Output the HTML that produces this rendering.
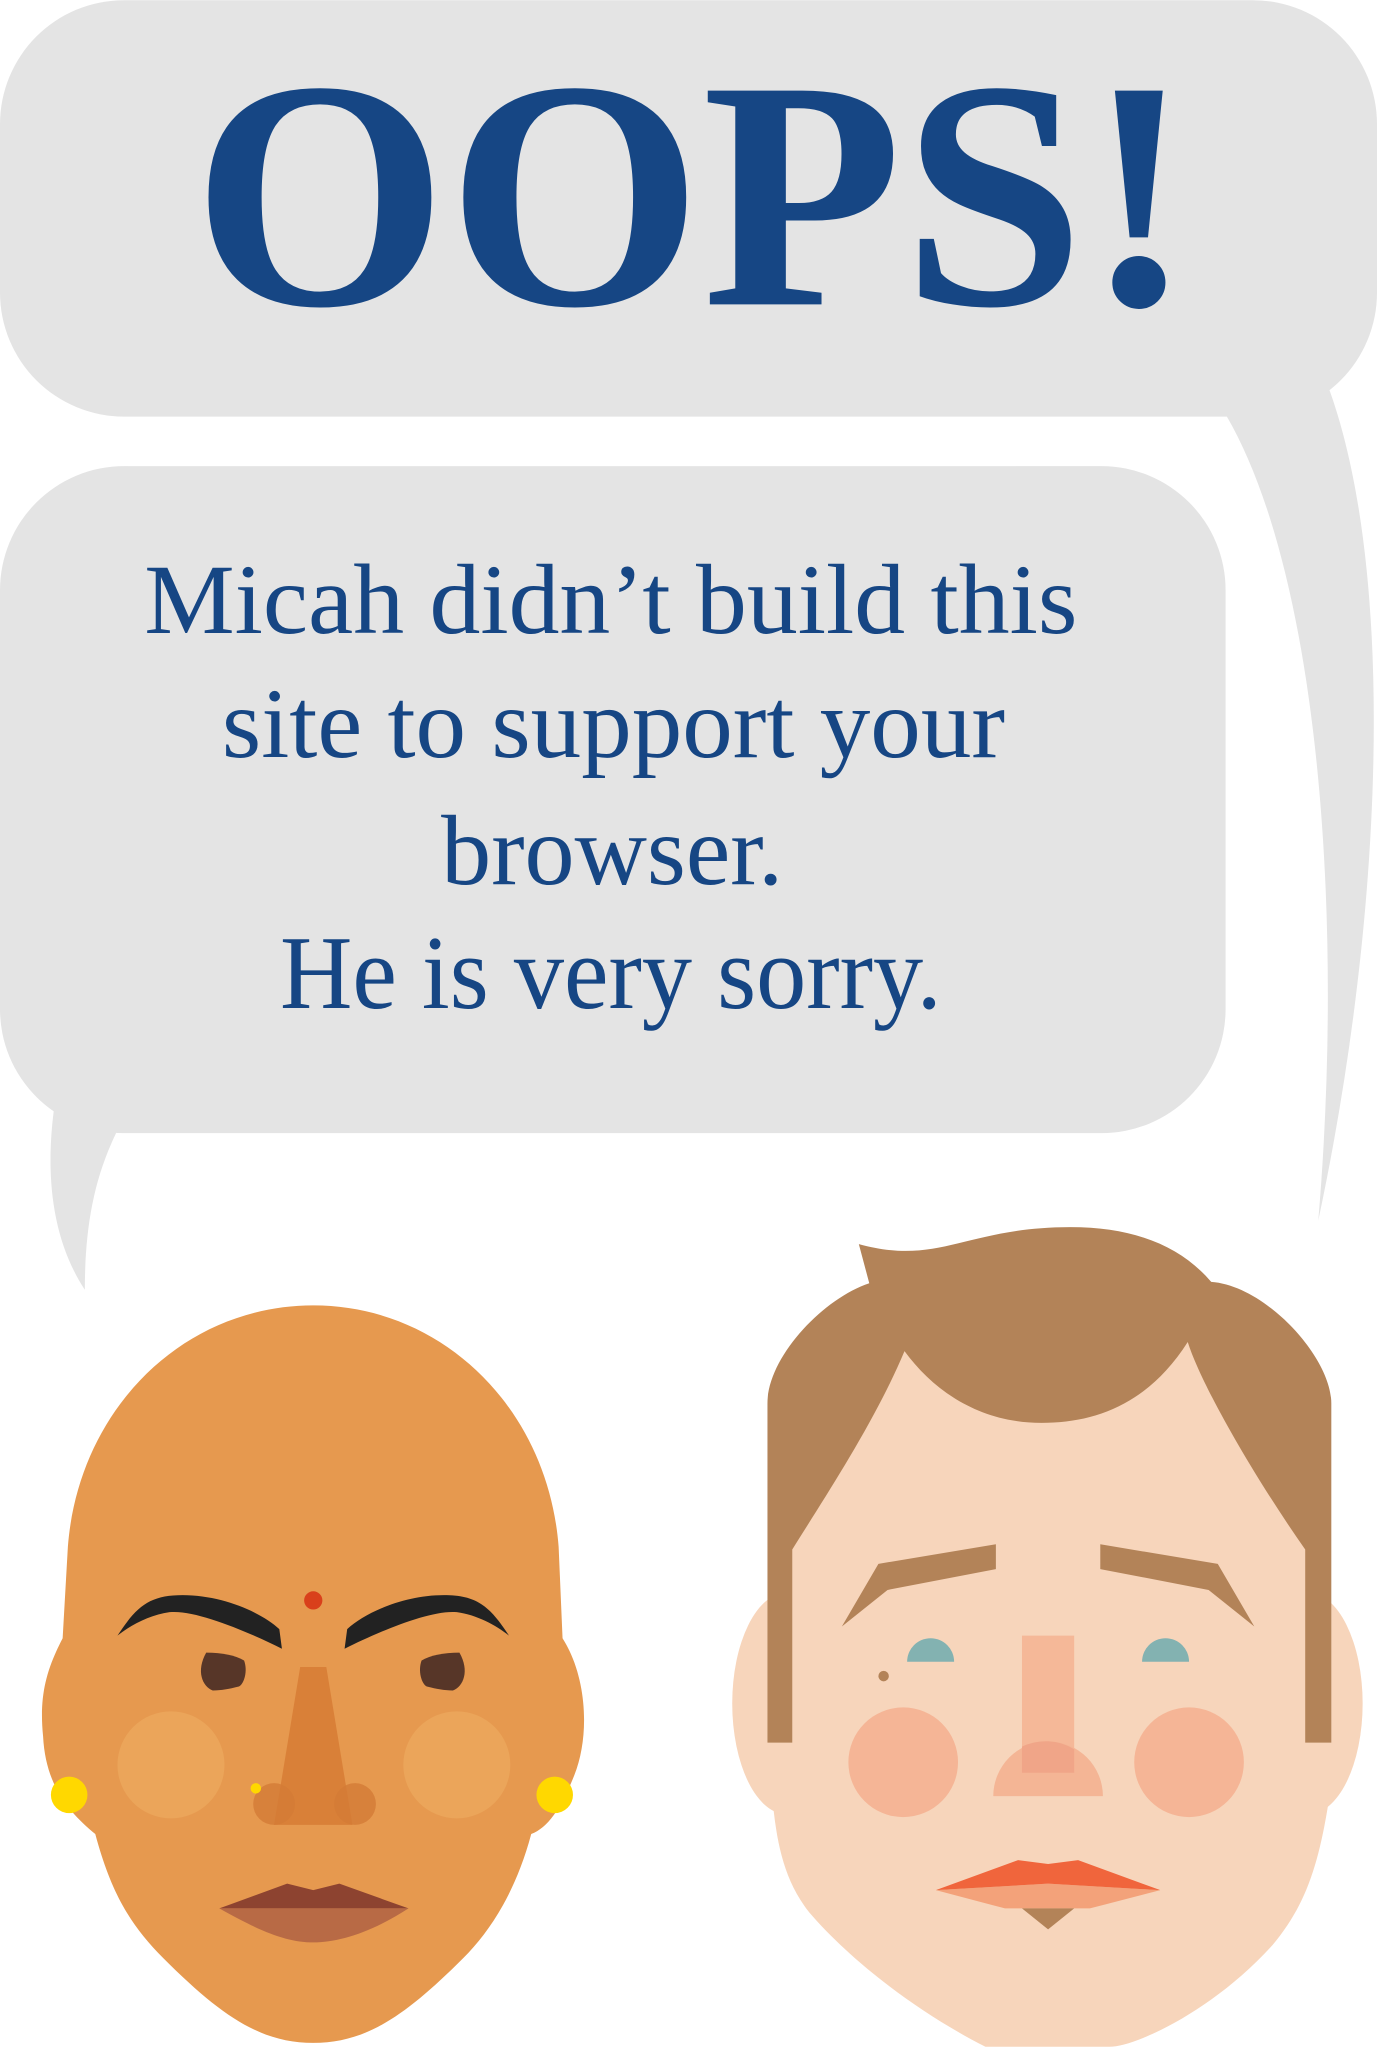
<!DOCTYPE html>
<html><head><meta charset="utf-8"><style>html,body{margin:0;padding:0;background:#fff;}svg{display:block}</style></head>
<body>
<svg width="1377" height="2047" viewBox="0 0 1055 1568" xmlns="http://www.w3.org/2000/svg">
<g fill="#e4e4e4">
<rect x="0" y="0" width="1055" height="319" rx="95"/>
<path d="M940,319 C1010,440 1030,700 1010,935 C1060,700 1070,440 1018,297 Z"/>
<rect x="0" y="357" width="939" height="511" rx="95"/>
<path d="M42,845 C34,900 40,950 65,988 C65,940 72,900 92,862 Z"/>
</g>
<text x="531" y="233" text-anchor="middle" font-family="Liberation Serif, serif" font-weight="bold" font-size="250" fill="#164684" textLength="767" lengthAdjust="spacingAndGlyphs">OOPS!</text>
<g font-family="Liberation Serif, serif" font-size="76" fill="#164684" text-anchor="middle">
<text x="468" y="485" textLength="715" lengthAdjust="spacingAndGlyphs">Micah didn’t build this</text>
<text x="470" y="580" textLength="600" lengthAdjust="spacingAndGlyphs">site to support your</text>
<text x="469" y="677" textLength="262" lengthAdjust="spacingAndGlyphs">browser.</text>
<text x="468" y="772" font-size="80" textLength="507" lengthAdjust="spacingAndGlyphs">He is very sorry.</text>
</g>
<!-- woman -->
<path fill="#e6994f" d="M52,1185 C60,1080 140,1000 240,1000 C340,1000 420,1080 428,1185 L431,1255 C450,1285 452,1330 440,1360 C430,1385 420,1400 407,1405 C395,1450 375,1480 355,1500 C310,1545 280,1565 240,1565 C200,1565 170,1545 125,1500 C100,1475 85,1450 73,1405 C55,1390 35,1370 33,1330 C30,1300 35,1280 48,1255 Z"/>
<circle cx="131" cy="1352" r="41" fill="#eba55a"/>
<circle cx="350" cy="1352" r="41" fill="#eba55a"/>
<polygon points="230,1277 250,1277 270,1398 210,1398" fill="#d98038"/>
<circle cx="210" cy="1382" r="16" fill="#d37a36" opacity="0.8"/>
<circle cx="272" cy="1382" r="16" fill="#d37a36" opacity="0.8"/>
<circle cx="196" cy="1370" r="4" fill="#ffd800"/>
<path fill="#222" d="M90,1253 C105,1230 115,1222 140,1222 C170,1222 200,1235 214,1248 L216,1263 C190,1250 150,1233 130,1235 C115,1237 100,1245 90,1253 Z"/>
<path fill="#222" d="M390,1253 C375,1230 365,1222 340,1222 C310,1222 280,1235 266,1248 L264,1263 C290,1250 330,1233 350,1235 C365,1237 380,1245 390,1253Z"/>
<path fill="#573628" d="M158,1266 C170,1266 180,1268 187,1272 C190,1280 187,1290 183,1292 C175,1294 170,1295 163,1295 C155,1292 150,1280 158,1266Z"/>
<path fill="#573628" d="M352,1266 C340,1266 330,1268 323,1272 C320,1280 323,1290 327,1292 C335,1294 340,1295 347,1295 C355,1292 360,1280 352,1266Z"/>
<circle cx="240" cy="1226" r="7" fill="#d9401b"/>
<circle cx="53" cy="1375" r="14" fill="#ffd800"/>
<circle cx="425" cy="1375" r="14" fill="#ffd800"/>
<path fill="#8d4330" d="M168,1462 L220,1443 L240,1448 L260,1443 L313,1462 Z"/>
<path fill="#b86a45" d="M168,1462 C200,1480 220,1488 240,1488 C260,1488 285,1480 313,1462 Z"/>
<!-- man -->
<g fill="#f7d5bb">
<ellipse cx="603" cy="1305" rx="42" ry="85"/>
<ellipse cx="1002" cy="1305" rx="42" ry="85"/>
<path d="M600,1190 L693,1030 L910,1025 L1010,1190 L1018,1380 C1010,1430 1000,1460 975,1490 C930,1540 870,1568 850,1568 L755,1568 C700,1540 650,1500 620,1465 C600,1440 595,1410 592,1380 Z"/>
</g>
<path fill="#b38358" d="M658,953 C720,970 740,940 820,940 C870,940 905,955 928,982 C970,985 1020,1040 1020,1075 L1020,1335 L1000,1335 L1000,1187 C960,1130 920,1060 910,1028 C880,1075 840,1090 798,1090 C750,1090 715,1065 693,1035 C670,1090 630,1150 607,1187 L607,1335 L588,1335 L588,1075 C588,1040 630,995 666,983 Z"/>
<path fill="#b38358" d="M673,1198 L763,1183 L763,1202 L680,1218 L645,1246 Z"/>
<path fill="#b38358" d="M933,1198 L843,1183 L843,1202 L926,1218 L961,1246 Z"/>
<path fill="#83b2b1" d="M695,1273 A18,18 0 1 1 731,1273 Z"/>
<path fill="#83b2b1" d="M875,1273 A18,18 0 1 1 911,1273 Z"/>
<circle cx="677" cy="1284" r="4" fill="#b38358"/>
<circle cx="692" cy="1350" r="42" fill="#f5b596"/>
<circle cx="911" cy="1350" r="42" fill="#f5b596"/>
<path fill="#f4b595" d="M761,1376 A42,42 0 0 1 845,1376 Z"/>
<rect x="783" y="1253" width="40" height="105" fill="#f4b595" opacity="0.9"/>
<path fill="#f0a588" d="M783,1338 A42,42 0 0 1 823,1340 L823,1358 L783,1358 Z"/>
<path fill="#f3a27a" d="M717,1448 L803,1443 L889,1448 L835,1462 L770,1462 Z"/>
<path fill="#f0653c" d="M717,1448 L780,1425 L803,1428 L826,1425 L889,1448 L803,1443 Z"/>
<path fill="#b38358" d="M783,1462 L823,1462 L803,1478 Z"/>
</svg>
</body></html>
